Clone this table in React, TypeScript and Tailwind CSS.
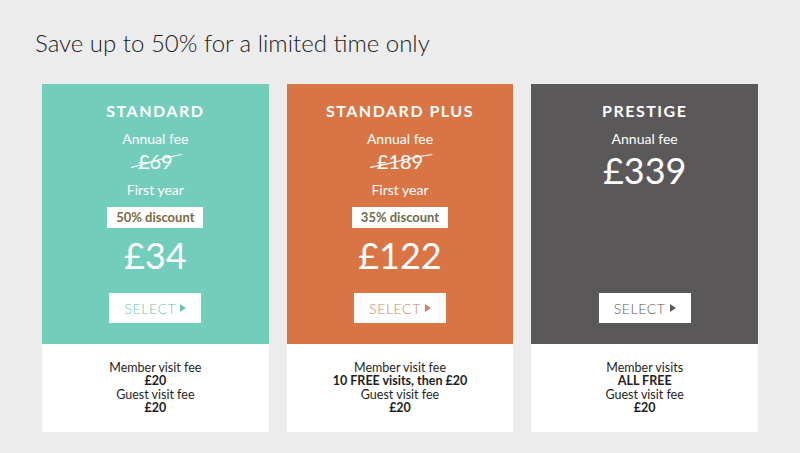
import React from "react";

type Plan = {
  name: string;
  bg: string;
  accent: string;
  oldPrice?: string;
  discount?: string;
  discountColor?: string;
  price: string;
  lines: { label: string; value: string }[];
};

const plans: Plan[] = [
  {
    name: "STANDARD",
    bg: "bg-[#73cdbb]",
    accent: "text-[#6cc6b4]",
    oldPrice: "£69",
    discount: "50% discount",
    discountColor: "text-[#7b6a3e]",
    price: "£34",
    lines: [
      { label: "Member visit fee", value: "£20" },
      { label: "Guest visit fee", value: "£20" },
    ],
  },
  {
    name: "STANDARD PLUS",
    bg: "bg-[#d97545]",
    accent: "text-[#c98462]",
    oldPrice: "£189",
    discount: "35% discount",
    discountColor: "text-[#6e6a4f]",
    price: "£122",
    lines: [
      { label: "Member visit fee", value: "10 FREE visits, then £20" },
      { label: "Guest visit fee", value: "£20" },
    ],
  },
  {
    name: "PRESTIGE",
    bg: "bg-[#5b5859]",
    accent: "text-[#5b5859]",
    price: "£339",
    lines: [
      { label: "Member visits", value: "ALL FREE" },
      { label: "Guest visit fee", value: "£20" },
    ],
  },
];

function Struck({ children }: { children: React.ReactNode }) {
  return (
    <span className="relative inline-block">
      {children}
      <svg
        className="absolute left-[-7px] top-[4px] w-[calc(100%+16px)] h-[16px] overflow-visible"
        viewBox="0 0 100 16"
        preserveAspectRatio="none"
      >
        <path
          d="M0 14.5 C 30 11, 60 5, 100 1.5"
          stroke="white"
          strokeWidth="1.2"
          fill="none"
          vectorEffect="non-scaling-stroke"
        />
      </svg>
    </span>
  );
}

function PlanCard({ plan }: { plan: Plan }) {
  return (
    <div className="w-[227px] flex flex-col">
      {/* Top */}
      <div className={`${plan.bg} h-[260px] flex flex-col items-center text-white pt-[17px] pb-[21px]`}>
        <div className="text-[16px] leading-[19px] font-bold tracking-[1.5px]">{plan.name}</div>
        <div className="mt-[10px] text-[14px] leading-[17px]">Annual fee</div>
        {plan.oldPrice ? (
          <>
            <div className="mt-[2px] text-[20px] leading-[24px]">
              <Struck>{plan.oldPrice}</Struck>
            </div>
            <div className="mt-[8px] text-[14px] leading-[17px]">First year</div>
            <div
              className={`mt-[9px] h-[21px] bg-white px-[9px] flex items-center text-[13px] font-bold ${plan.discountColor}`}
            >
              {plan.discount}
            </div>
            <div className="mt-[6px] text-[36px] leading-[43px]">{plan.price}</div>
          </>
        ) : (
          <div className="mt-[2px] text-[36px] leading-[43px]">{plan.price}</div>
        )}
        <button
          className={`mt-auto w-[92px] h-[30px] bg-white flex items-center justify-center gap-[4px] text-[14px] font-light tracking-[0.6px] ${plan.accent}`}
        >
          SELECT
          <svg width="6" height="8" viewBox="0 0 6 8">
            <path d="M0 0 L6 4 L0 8 Z" fill="currentColor" />
          </svg>
        </button>
      </div>

      {/* Bottom */}
      <div className="bg-white h-[88px] pt-[17px] flex flex-col items-center text-[12.5px] leading-[13.4px] text-[#1e1e1e]">
        {plan.lines.map((l) => (
          <React.Fragment key={l.label}>
            <div>{l.label}</div>
            <div className="font-bold">{l.value}</div>
          </React.Fragment>
        ))}
      </div>
    </div>
  );
}

export default function App() {
  return (
    <div className="w-[800px] h-[453px] bg-[#ececec] font-['Lato',sans-serif] pt-[28px] px-[42px] overflow-hidden">
      <h1 className="ml-[-7px] text-[24px] leading-[29px] font-light text-[#222]">
        Save up to 50% for a limited time only
      </h1>
      <div className="mt-[27px] flex gap-[18px]">
        {plans.map((p) => (
          <PlanCard key={p.name} plan={p} />
        ))}
      </div>
    </div>
  );
}
